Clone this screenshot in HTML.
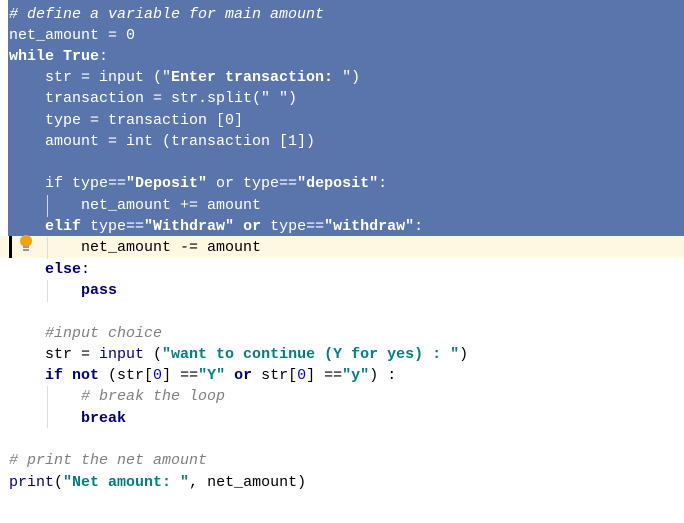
<!DOCTYPE html>
<html><head><meta charset="utf-8"><style>
html,body{margin:0;padding:0;}
body{width:684px;height:523px;background:#fff;position:relative;overflow:hidden;font-family:"Liberation Mono",monospace;font-size:15px;}
.l{position:absolute;left:9px;height:21px;line-height:21px;white-space:pre;color:#000;}
.sel .l,.s{color:#fff;}
.k{color:#000080;font-weight:bold;}
.st{color:#008080;font-weight:bold;}
.c{color:#808080;font-style:italic;}
.b{color:#000080;}
.n{color:#0000ff;}
.sel .k,.sel .st,.sel .c,.sel .b,.sel .n{color:#fff;}
.guide{position:absolute;width:1px;background:#ddd;}
</style></head><body>
<div style="position:absolute;left:8px;top:0;width:676px;height:236px;background:#5a75ab"></div>
<div style="position:absolute;left:0;top:236px;width:684px;height:22px;background:#fef8e3"></div>
<div style="position:absolute;left:9px;top:236px;width:3px;height:22px;background:#000"></div>
<div style="position:absolute;left:20px;top:235px;width:12px;height:12px;border-radius:50%;background:#f0a30a"></div>
<div style="position:absolute;left:23px;top:246px;width:6px;height:2px;background:#999"></div>
<div style="position:absolute;left:23px;top:249px;width:6px;height:2px;background:#999"></div>
<div class="guide" style="left:47px;top:195px;height:22px;background:#cfd8e8"></div>
<div class="guide" style="left:47px;top:237px;height:22px"></div>
<div class="guide" style="left:47px;top:280px;height:22px"></div>
<div class="guide" style="left:47px;top:386px;height:42px"></div>
<div class="sel">
<div class="l" style="top:4px"><span class="c"># define a variable for main amount</span></div>
<div class="l" style="top:25px">net_amount = 0</div>
<div class="l" style="top:46px"><span class="k">while True</span>:</div>
<div class="l" style="top:67px">    str = input ("<b>Enter transaction: </b>")</div>
<div class="l" style="top:88px">    transaction = str.split(" ")</div>
<div class="l" style="top:110px">    type = transaction [0]</div>
<div class="l" style="top:131px">    amount = int (transaction [1])</div>
<div class="l" style="top:173px">    if type==<b>"Deposit"</b> or type==<b>"deposit"</b>:</div>
<div class="l" style="top:195px">        net_amount += amount</div>
<div class="l" style="top:216px">    <b>elif</b> type==<b>"Withdraw"</b> <b>or</b> type==<b>"withdraw"</b>:</div>
</div>
<div class="l" style="top:237px">        net_amount -= amount</div>
<div class="l" style="top:259px">    <span class="k">else</span>:</div>
<div class="l" style="top:280px">        <span class="k">pass</span></div>
<div class="l" style="top:323px">    <span class="c">#input choice</span></div>
<div class="l" style="top:344px">    str = <span class="b">input</span> (<span class="st">"want to continue (Y for yes) : "</span>)</div>
<div class="l" style="top:365px">    <span class="k">if not</span> (str[<span class="n">0</span>] ==<span class="st">"Y"</span> <span class="k">or</span> str[<span class="n">0</span>] ==<span class="st">"y"</span>) :</div>
<div class="l" style="top:386px">        <span class="c"># break the loop</span></div>
<div class="l" style="top:408px">        <span class="k">break</span></div>
<div class="l" style="top:450px"><span class="c"># print the net amount</span></div>
<div class="l" style="top:472px"><span class="b">print</span>(<span class="st">"Net amount: "</span>, net_amount)</div>
</body></html>
